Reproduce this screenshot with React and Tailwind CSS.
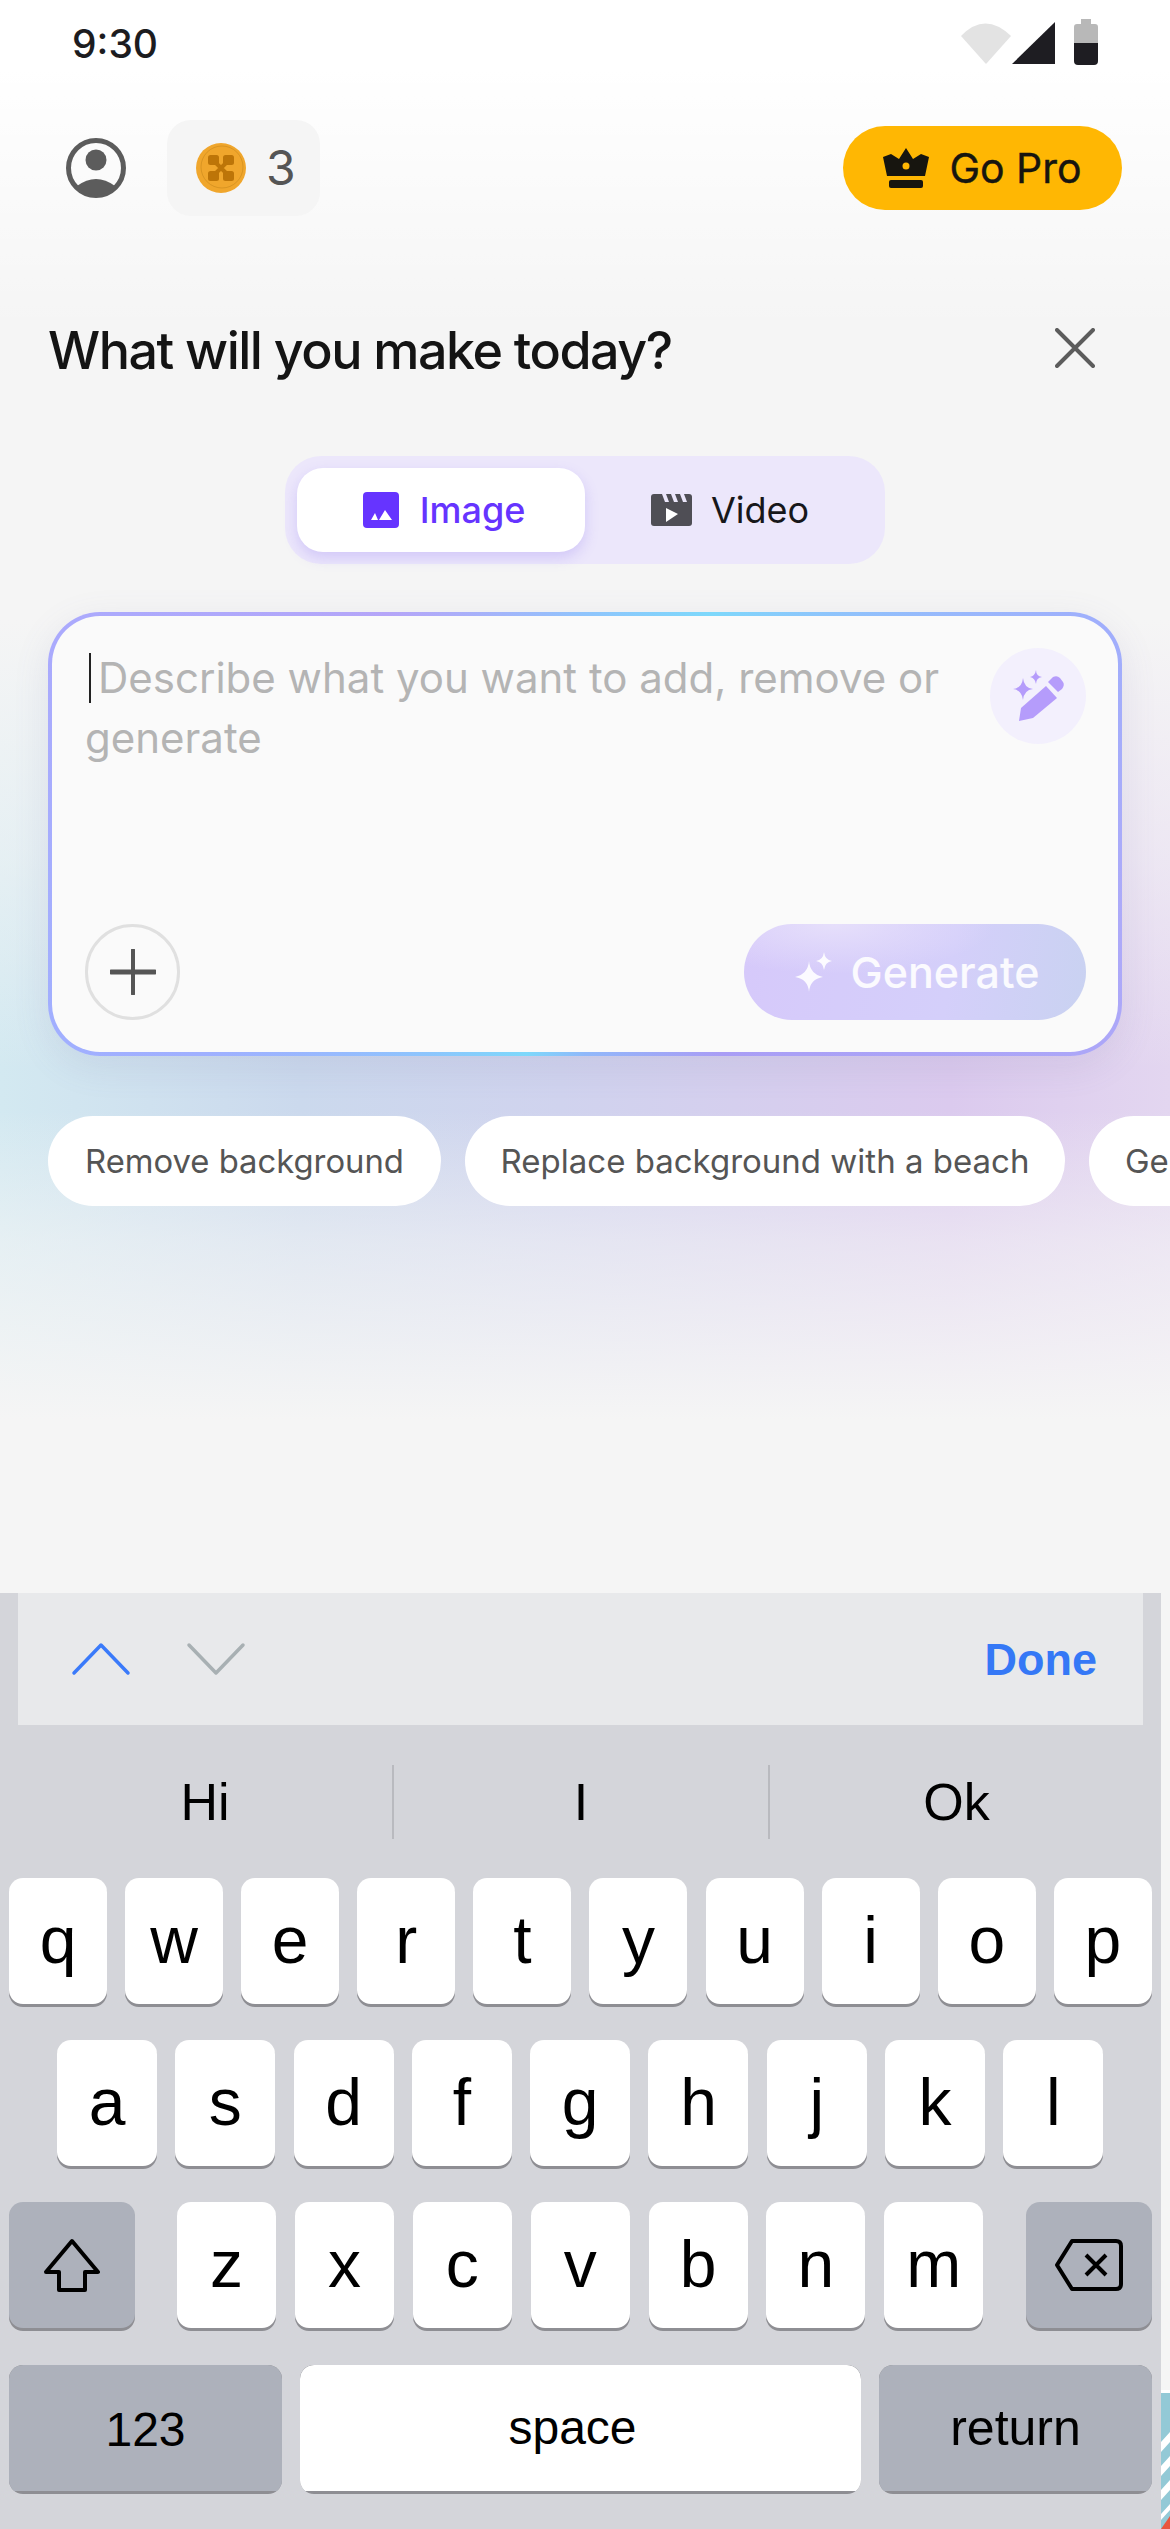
import React from 'react';

const ROW_1 = ['q', 'w', 'e', 'r', 't', 'y', 'u', 'i', 'o', 'p'];
const ROW_2 = ['a', 's', 'd', 'f', 'g', 'h', 'j', 'k', 'l'];
const ROW_3 = ['z', 'x', 'c', 'v', 'b', 'n', 'm'];

function StatusIcons() {
  return (
    <svg width="140" height="48" viewBox="0 0 140 48">
      <path d="M2 17 Q26 -8 52 17 L27 45 Z" fill="#e3e3e3" />
      <path d="M53 45 L96 3 V45 Z" fill="#1e1d22" />
      <path d="M122 0 H132 V5 H136 Q139 5 139 8 V24 H115 V8 Q115 5 118 5 H122 Z" fill="#b8b8b8" />
      <path d="M115 24 H139 V42 Q139 46 135 46 H119 Q115 46 115 42 Z" fill="#1e1d22" />
    </svg>
  );
}

function Avatar() {
  return (
    <svg width="60" height="60" viewBox="0 0 60 60">
      <circle cx="30" cy="30" r="27.5" fill="none" stroke="#5c5c5c" strokeWidth="5" />
      <circle cx="30" cy="22" r="10.5" fill="#5c5c5c" />
      <path d="M11 48 Q30 34 49 48 Q40 57 30 57 Q20 57 11 48 Z" fill="#5c5c5c" />
    </svg>
  );
}

function Coin() {
  return (
    <svg width="50" height="50" viewBox="0 0 50 50">
      <circle cx="25" cy="25" r="25" fill="#f0a62c" />
      <circle cx="26" cy="24" r="21" fill="none" stroke="#cf8d1e" strokeWidth="0.7" />
      <rect x="12" y="12" width="11" height="10" rx="2.5" fill="#bd7508" />
      <rect x="27" y="12" width="11" height="10" rx="2.5" fill="#bd7508" />
      <rect x="12" y="28" width="11" height="10" rx="2.5" fill="#bd7508" />
      <rect x="27" y="28" width="11" height="10" rx="2.5" fill="#bd7508" />
      <path d="M20 20 L30 30 M30 20 L20 30" stroke="#bd7508" strokeWidth="4" />
    </svg>
  );
}

function Crown() {
  return (
    <svg width="46" height="40" viewBox="0 0 46 40">
      <path d="M23 0 L30 11 L38 6 L46 9 L42 28 H4 L0 9 L8 6 L16 11 Z" fill="#17150f" />
      <circle cx="23" cy="18" r="3.5" fill="#ffb703" />
      <rect x="6" y="32" width="34" height="8" rx="2" fill="#17150f" />
    </svg>
  );
}

function ImageIcon() {
  return (
    <svg width="36" height="36" viewBox="0 0 36 36">
      <rect width="36" height="36" rx="4" fill="#6634ff" />
      <path d="M8 28 L12 21 L15 28 Z M16 28 L22 18 L29 28 Z" fill="#fff" />
    </svg>
  );
}

function VideoIcon() {
  return (
    <svg width="41" height="32" viewBox="0 0 41 32">
      <path d="M3 0 H38 Q41 0 41 3 V29 Q41 32 38 32 H3 Q0 32 0 29 V3 Q0 0 3 0 Z" fill="#4f4e55" />
      <path d="M11 0 L14 8 H18 L15 0 Z M20 0 L23 8 H27 L24 0 Z M29 0 L32 8 H36 L33 0 Z" fill="#ece7fb" />
      <path d="M15 14 L27 20 L15 28 Z" fill="#fff" />
    </svg>
  );
}

function WandIcon() {
  return (
    <svg width="96" height="96" viewBox="0 0 96 96">
      <path d="M56 38 L67 50 L43 70 L29 73 L31 60 Z" fill="#b59cfb" />
      <path d="M58 34 L63 29 Q67 27 70 30 L73 34 Q75 37 72 41 L68 44 Z" fill="#b59cfb" />
      <path d="M33 30 Q34 40 43 41 Q34 42 33 52 Q32 42 23 41 Q32 40 33 30 Z" fill="#b59cfb" />
      <path d="M46 22 Q46 28 52 29 Q46 30 46 36 Q45 30 40 29 Q45 28 46 22 Z" fill="#b59cfb" />
    </svg>
  );
}

function SparkleIcon() {
  return (
    <svg width="38" height="40" viewBox="0 0 38 40">
      <path d="M14 9 Q15 22 28 25 Q15 27 14 40 Q13 27 0 25 Q13 22 14 9 Z" fill="#fff" opacity="0.9" />
      <path d="M29 0 Q30 8 37 9 Q30 10 29 18 Q28 10 21 9 Q28 8 29 0 Z" fill="#fff" opacity="0.9" />
    </svg>
  );
}

function Chevron({ up, color }) {
  return (
    <svg width="60" height="34" viewBox="0 0 60 34">
      <path d={up ? 'M3 31 L30 3 L57 31' : 'M3 3 L30 31 L57 3'} fill="none" stroke={color} strokeWidth="3.5" strokeLinecap="round" strokeLinejoin="round" />
    </svg>
  );
}

function Key({ label, className = 'w-[98px]' }) {
  return (
    <div className={`${className} h-[126px] rounded-[14px] bg-white shadow-[0_3px_0_#8e8e93] flex items-center justify-center pb-[2px] text-[66px] leading-none text-black`}>
      {label}
    </div>
  );
}

export default function App() {
  return (
    <div className="w-[1170px] h-[2529px] overflow-hidden flex flex-col font-['Inter',sans-serif] bg-[#f5f5f5]">
      <section className="h-[1593px] shrink-0 bg-[linear-gradient(180deg,#ffffff_70px,rgba(255,255,255,0)_330px),linear-gradient(180deg,#f5f5f5_620px,rgba(245,245,245,0.55)_860px,rgba(245,245,245,0)_1070px,rgba(245,245,245,0)_1110px,rgba(245,245,245,0.55)_1240px,#f5f5f5_1420px),linear-gradient(90deg,#d3e9f1_0,#cbd9ed_300px,#d0d3ee_560px,#dbcaee_950px,#e3d6f0_1170px)]">
        <div className="h-[86px] pl-[72px] pr-[71px] flex items-center justify-between">
          <span className="text-[39px] leading-none font-medium text-[#1c1c1f]">9:30</span>
          <StatusIcons />
        </div>

        <div className="mt-[34px] pl-[66px] pr-[48px] flex items-center">
          <Avatar />
          <div className="ml-[41px] w-[153px] h-[96px] rounded-[24px] bg-[#f5f5f5] flex items-center pl-[29px] gap-[20px]">
            <Coin />
            <span className="text-[48px] leading-none text-[#555]">3</span>
          </div>
          <div className="ml-auto w-[279px] h-[84px] rounded-full bg-[#ffb703] flex items-center justify-center gap-[20px]">
            <Crown />
            <span className="text-[41px] leading-none text-[#17150f] [-webkit-text-stroke:0.4px_#17150f]">Go Pro</span>
          </div>
        </div>

        <div className="mt-[105px] pl-[48px] pr-[75px] flex items-center justify-between">
          <h1 className="text-[52px] leading-[60px] font-medium tracking-[-1.5px] text-[#141414]">What will you make today?</h1>
          <svg width="40" height="40" viewBox="0 0 40 40" className="mb-[6px]">
            <path d="M2 2 L38 38 M38 2 L2 38" stroke="#5c5c5c" strokeWidth="4" strokeLinecap="round" />
          </svg>
        </div>

        <div className="mt-[75px] mx-auto w-[600px] h-[108px] rounded-[36px] bg-[#ece7fb] p-[12px] flex">
          <div className="w-[288px] h-[84px] rounded-[26px] bg-white shadow-[0_6px_14px_rgba(120,90,240,0.22)] flex items-center justify-center gap-[21px] pl-[6px]">
            <ImageIcon />
            <span className="text-[36px] leading-none font-medium text-[#6634ff]">Image</span>
          </div>
          <div className="flex-1 flex items-center justify-center gap-[19px] pl-[2px]">
            <VideoIcon />
            <span className="text-[36px] leading-none text-[#17171a]">Video</span>
          </div>
        </div>

        <div className="mt-[48px] mx-[48px] h-[444px] rounded-[52px] p-[4px] shadow-[0_10px_36px_rgba(110,110,160,0.12)] bg-[conic-gradient(from_0deg,#8fc4fc_0deg,#7dd8fb_30deg,#a0aefc_68deg,#adaaf9_100deg,#a99df5_148deg,#90b8fa_180deg,#7dd8fb_195deg,#9fb0ff_240deg,#aaaafd_290deg,#b5a5f8_318deg,#8fc4fc_360deg)]">
          <div className="h-full rounded-[48px] bg-[#fafafa] pl-[33px] pr-[32px] pt-[32px] pb-[32px] flex flex-col">
            <div className="flex justify-between">
              <p className="w-[860px] text-[42px] leading-[60px] text-[#b4b4b4]">
                <span className="inline-block w-[13px]">
                  <span className="inline-block w-[2px] h-[50px] bg-[#222] align-[-10px] ml-[4px]" />
                </span>
                Describe what you want to add, remove or generate
              </p>
              <div className="w-[96px] h-[96px] shrink-0 rounded-full bg-[#f3f0fd]">
                <WandIcon />
              </div>
            </div>
            <div className="mt-auto flex items-center justify-between">
              <div className="w-[95px] h-[96px] rounded-full border-[3px] border-[#e0e0e0] flex items-center justify-center">
                <svg width="46" height="46" viewBox="0 0 46 46">
                  <path d="M23 1 V45" stroke="#555" strokeWidth="4" strokeLinecap="round" />
                  <path d="M1 23 H45" stroke="#555" strokeWidth="5" strokeLinecap="round" />
                </svg>
              </div>
              <div className="w-[342px] h-[96px] rounded-full bg-[radial-gradient(ellipse_160px_50px_at_90px_0px,#e6dffb_0%,rgba(230,223,251,0)_100%),linear-gradient(100deg,#d6c9fa_0%,#d4cffa_60%,#c9d2f1_100%)] flex items-center justify-center gap-[18px] pl-[4px]">
                <SparkleIcon />
                <span className="text-[43px] leading-none font-medium text-white/90">Generate</span>
              </div>
            </div>
          </div>
        </div>

        <div className="mt-[60px] pl-[48px] flex gap-[24px] overflow-hidden">
          <div className="w-[393px] h-[90px] shrink-0 rounded-full bg-white flex items-center justify-center text-[32.8px] leading-none text-[#555]">Remove background</div>
          <div className="w-[600px] h-[90px] shrink-0 rounded-full bg-white flex items-center justify-center text-[33px] leading-none text-[#555]">Replace background with a beach</div>
          <div className="h-[90px] px-[36px] shrink-0 rounded-full bg-white flex items-center text-[33px] leading-none text-[#555]">Generate a portrait</div>
        </div>
      </section>

      <div className="flex-1 flex font-['Liberation_Sans',sans-serif]">
        <div className="w-[1161px] shrink-0 bg-[#d4d5da]">
          <div className="ml-[18px] w-[1125px] h-[132px] bg-[#e8e9eb] flex items-center pl-[53px] pr-[46px]">
            <Chevron up color="#3a7afa" />
            <div className="ml-[55px]">
              <Chevron color="#a8b0b3" />
            </div>
            <span className="ml-auto text-[45px] leading-none font-bold text-[#3578f6]">Done</span>
          </div>

          <div className="h-[153px] flex items-center text-[52px] leading-none text-black">
            <div className="w-[392px] text-center pl-[18px]">Hi</div>
            <div className="w-[2px] h-[74px] bg-[#b9babf]" />
            <div className="w-[374px] text-center">I</div>
            <div className="w-[2px] h-[74px] bg-[#b9babf]" />
            <div className="flex-1 text-center pr-[18px]">Ok</div>
          </div>

          <div className="pl-[9px] flex gap-[18.1px]">
            {ROW_1.map((k) => <Key key={k} label={k} />)}
          </div>
          <div className="mt-[36px] pl-[57px] flex gap-[18.3px]">
            {ROW_2.map((k) => <Key key={k} label={k} className="w-[100px]" />)}
          </div>
          <div className="mt-[36px] pl-[9px] flex">
            <div className="w-[126px] h-[126px] rounded-[14px] bg-[#adb1bb] shadow-[0_3px_0_#8e8e93] flex items-center justify-center">
              <svg width="60" height="54" viewBox="0 0 60 54">
                <path d="M30 3 L56 34 H43 V52 H17 V34 H4 Z" fill="none" stroke="#000" strokeWidth="4" strokeLinejoin="round" />
              </svg>
            </div>
            <div className="ml-[42px] flex gap-[18.9px]">
              {ROW_3.map((k) => <Key key={k} label={k} className="w-[99px]" />)}
            </div>
            <div className="ml-[43px] w-[126px] h-[126px] rounded-[14px] bg-[#adb1bb] shadow-[0_3px_0_#8e8e93] flex items-center justify-center">
              <svg width="70" height="54" viewBox="0 0 70 54">
                <path d="M18 3 H62 Q67 3 67 8 V46 Q67 51 62 51 H18 L3 27 Z" fill="none" stroke="#000" strokeWidth="4" strokeLinejoin="round" />
                <path d="M32 17 L52 37 M52 17 L32 37" stroke="#000" strokeWidth="4" />
              </svg>
            </div>
          </div>
          {/* bottom row: the dark edge only shows at the corners */}
          <div className="mt-[37px] pl-[9px] flex gap-[18px]">
            <div className="w-[273px] h-[129px] rounded-[14px] overflow-hidden bg-[#8e8e93]">
              <div className="h-[126px] rounded-t-[14px] bg-[#adb1bb] flex items-center justify-center pt-[4px] text-[48px] leading-none text-black">123</div>
            </div>
            <div className="w-[561px] h-[129px] rounded-[14px] overflow-hidden bg-[#8e8e93]">
              <div className="h-[126px] rounded-t-[14px] bg-white flex items-center justify-center pr-[16px] text-[48px] leading-none text-black">space</div>
            </div>
            <div className="w-[273px] h-[129px] rounded-[14px] overflow-hidden bg-[#8e8e93]">
              <div className="h-[126px] rounded-t-[14px] bg-[#adb1bb] flex items-center justify-center text-[50px] leading-none text-black">return</div>
            </div>
          </div>
        </div>

        <div className="flex-1 flex flex-col justify-end">
          <svg width="9" height="139" viewBox="0 0 9 139" className="block">
            <rect width="9" height="139" fill="#93c9d6" />
            <rect width="9" height="3" fill="#ffffff" />
            <path d="M9 42 L0 52 V62 L9 52 Z M9 66 L0 76 V86 L9 76 Z M9 90 L0 100 V110 L9 100 Z M9 114 L0 124 V130 L9 120 Z" fill="#ffffff" />
            <path d="M9 126 L0 139 H9 Z" fill="#e8563f" />
          </svg>
        </div>
      </div>
    </div>
  );
}
